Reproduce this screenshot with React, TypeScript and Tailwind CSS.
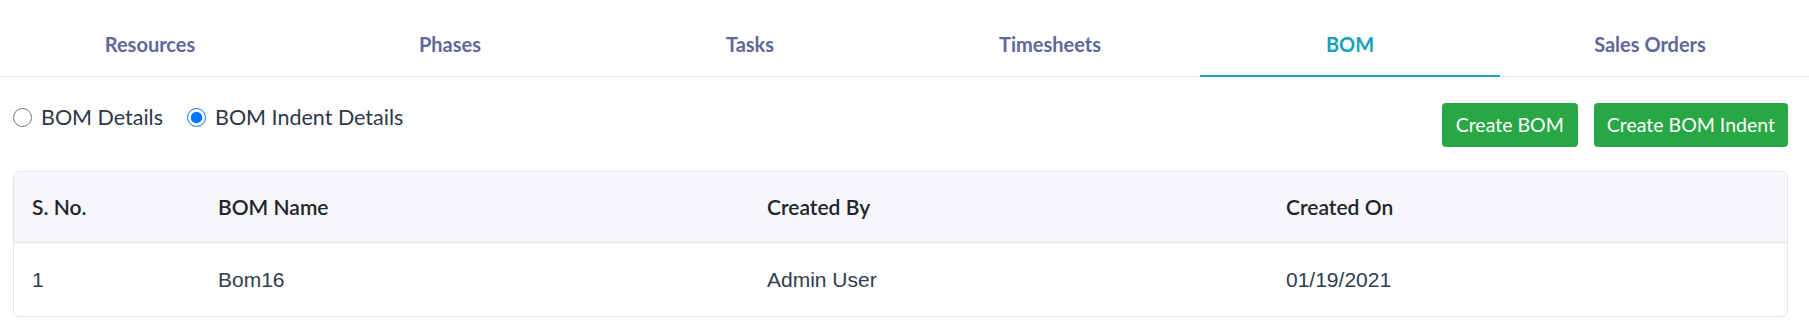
import React, { useState } from "react";

const tabs = ["Resources", "Phases", "Tasks", "Timesheets", "BOM", "Sales Orders"];

const rows = [{ sno: "1", name: "Bom16", createdBy: "Admin User", createdOn: "01/19/2021" }];

const App: React.FC = () => {
  const [active, setActive] = useState("BOM");
  const [mode, setMode] = useState("indent");

  return (
    <div className="w-[1809px] h-[331px] bg-white font-['Lato',sans-serif] overflow-hidden">
      {/* Tabs */}
      <div className="h-[77px] border-b border-[#dee2e6] pr-[9px]">
        <div className="flex h-full">
          {tabs.map((t) => (
            <button
              key={t}
              onClick={() => setActive(t)}
              className={`relative flex-1 h-full pt-[11px] text-[20px] leading-[24px] font-bold ${
                active === t ? "text-[#17a2b8]" : "text-[#5f679b]"
              }`}
            >
              {t}
              {active === t && <span className="absolute left-0 right-0 -bottom-px h-[2px] bg-[#17a2b8]" />}
            </button>
          ))}
        </div>
      </div>

      <div className="pl-[13px] pr-[21px]">
        {/* Mode + actions */}
        <div className="flex justify-between items-start">
          <div className="flex items-center gap-[24px] pt-[27px] text-[21.5px] leading-[26px] text-[#2d3748]">
            <label className="flex items-center gap-[9px] cursor-pointer">
              <input
                type="radio"
                name="mode"
                checked={mode === "details"}
                onChange={() => setMode("details")}
                className="w-[19px] h-[19px] m-0"
              />
              BOM Details
            </label>
            <label className="flex items-center gap-[9px] cursor-pointer">
              <input
                type="radio"
                name="mode"
                checked={mode === "indent"}
                onChange={() => setMode("indent")}
                className="w-[19px] h-[19px] m-0"
              />
              BOM Indent Details
            </label>
          </div>
          <div className="flex gap-[16px] pt-[26px]">
            <button className="h-[44px] px-[14px] rounded-[4px] bg-[#28a745] text-white text-[19.5px]">Create BOM</button>
            <button className="h-[44px] px-[13px] rounded-[4px] bg-[#28a745] text-white text-[19.5px]">Create BOM Indent</button>
          </div>
        </div>

        {/* Table */}
        <div className="mt-[24px] border border-[#e4e4ea] rounded-[6px] overflow-hidden">
          <div className="grid grid-cols-[204px_549px_519px_1fr] h-[71px] items-center bg-[#f7f6fd] border-b border-[#e4e4ea] text-[21px] font-semibold text-[#212529]">
            <div className="pl-[18px]">S. No.</div>
            <div>BOM Name</div>
            <div>Created By</div>
            <div>Created On</div>
          </div>
          {rows.map((r) => (
            <div
              key={r.sno}
              className="grid grid-cols-[204px_549px_519px_1fr] h-[73px] items-center font-['Liberation_Sans',Arial,sans-serif] text-[21px] text-[#2f3d4f]"
            >
              <div className="pl-[18px]">{r.sno}</div>
              <div>{r.name}</div>
              <div>{r.createdBy}</div>
              <div>{r.createdOn}</div>
            </div>
          ))}
        </div>
      </div>
    </div>
  );
};

export default App;
